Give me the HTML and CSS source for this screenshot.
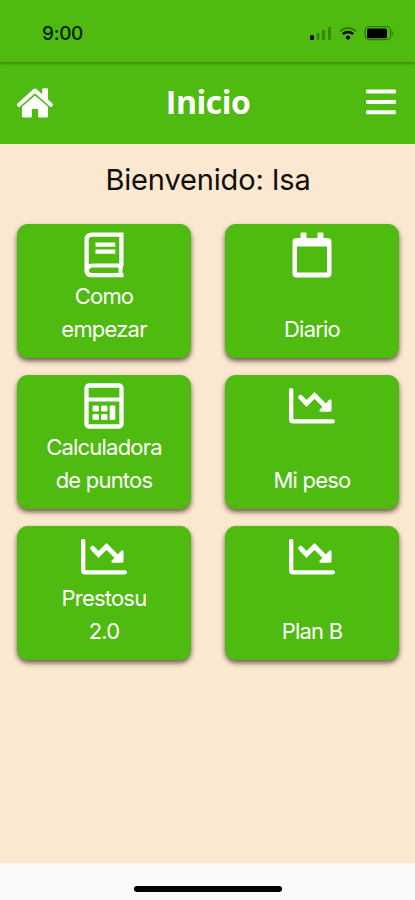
FILE: index.html
```
<!DOCTYPE html>
<html lang="es">
<head>
<meta charset="utf-8">
<title>Inicio</title>
<link rel="stylesheet" href="styles.css">
</head>
<body>
<svg class="defs" aria-hidden="true">
  <symbol id="chart" viewBox="0 0 46 36">
    <path d="M2.2 2V31.5Q2.2 33.3 4 33.3H43.8" fill="none" stroke="currentColor" stroke-width="4.3" stroke-linecap="round"/>
    <path d="M11.5 9.2L17.5 15.5L25.5 7.5L36.5 18.5" fill="none" stroke="currentColor" stroke-width="4.8" stroke-linecap="round"/>
    <path d="M42.5 12.5V22.3Q42.5 23.7 41 23.7H31.5Q29.5 23.2 30.8 21.5L40 12Q41.8 10.5 42.5 12.5Z" fill="currentColor"/>
  </symbol>
</svg>
<header>
  <div class="status">
    <span class="time">9:00</span>
    <svg class="signals" width="88" height="18" viewBox="0 0 88 18">
      <rect x="3" y="10" width="4" height="5" rx="1.5"/>
      <g opacity=".28"><rect x="9.500" y="8" width="3" height="7" rx="1"/><rect x="15" y="5" width="3" height="10" rx="1"/><rect x="21" y="2" width="3" height="13" rx="1"/></g>
      <path d="M33 6Q41 .2 49 6" fill="none" stroke="#000" stroke-width="2" opacity=".35"/>
      <path d="M35.800 9Q41 5 46.200 9" fill="none" stroke="#000" stroke-width="2.500"/>
      <circle cx="41" cy="12.600" r="2.100"/>
      <rect x="58.200" y="1.700" width="25.600" height="13" rx="4" fill="none" stroke="#000" stroke-width="1.300" opacity=".35"/>
      <rect x="60" y="3.500" width="20" height="9.800" rx="1.500"/>
      <path d="M85.300 6V11Q87.300 8.500 85.300 6Z" opacity=".4"/>
    </svg>
  </div>
  <div class="bar">
    <svg class="home" width="38" height="31" viewBox="0 0 38 31" fill="#fff">
      <path d="M1.3 16.8L17.2 2.2Q19 .8 20.8 2.2L26.2 7.2V2.2Q26.2 1.2 27.2 1.2H31Q32 1.2 32 2.2V12.5L36.700 16.800Q37.600 17.700 36.800 18.600L35.700 19.800Q35 20.400 34.200 19.700L19 6.200L3.800 19.700Q3 20.400 2.300 19.800L1.200 18.600Q.4 17.700 1.300 16.800Z"/>
      <path d="M6 19.800L19 8.400L32 19.800V29Q32 30.500 30.500 30.500H23.300Q22.200 30.500 22.200 29.400V22.800Q22.200 22 21.400 22H16.600Q15.800 22 15.800 22.800V29.400Q15.800 30.500 14.700 30.500H7.500Q6 30.500 6 29Z"/>
    </svg>
    <h1>Inicio</h1>
    <svg class="menu" width="30" height="26" viewBox="0 0 30 26" fill="#fff"><rect y=".5" width="30" height="4" rx="1.300"/><rect y="11" width="30" height="4" rx="1.300"/><rect y="21.300" width="30" height="4" rx="1.300"/></svg>
  </div>
</header>
<main>
  <h2>Bienvenido: Isa</h2>
  <div class="grid">
    <a class="card">
      <svg width="40" height="46" viewBox="0 0 40 46" fill="none" stroke="#fff">
        <path d="M37.400 34V2.600H8Q2.600 2.600 2.600 8V38Q2.600 43.200 8 43.200H39.500" stroke-width="4.300"/>
        <path d="M3 39Q3 33.400 8.500 33.400H39" stroke-width="4"/>
        <path d="M36.500 33V43" stroke-width="4"/>
        <path d="M11.500 12.700H31.300M11.500 19.700H31.300" stroke-width="4.300"/>
      </svg>
      <span>Como<br>empezar</span>
    </a>
    <a class="card">
      <svg width="40" height="46" viewBox="0 0 40 46" fill="#fff">
        <path fill-rule="evenodd" d="M8.5 6V1.5Q8.5.5 9.5.5H13.5Q14.5.5 14.5 1.5V6H25.5V1.5Q25.5.5 26.5.5H30.5Q31.5.5 31.5 1.5V6H35.5Q39.5 6 39.5 10V41.5Q39.5 45.5 35.5 45.5H4.500Q.5 45.500 .5 41.5V10Q.5 6 4.500 6ZM5 14.500V40.500H35V14.500Z"/>
      </svg>
      <span>Diario</span>
    </a>
    <a class="card">
      <svg width="40" height="46" viewBox="0 0 40 46" fill="#fff">
        <rect x="2.500" y="2.500" width="35" height="41" rx="2.500" fill="none" stroke="#fff" stroke-width="4.300"/>
        <rect x="3" y="14.500" width="34" height="4"/>
        <rect x="8.500" y="22.500" width="6.500" height="6" rx="1.500"/><rect x="17" y="22.500" width="6.500" height="6" rx="1.500"/><rect x="8.500" y="31" width="6.500" height="6" rx="1.500"/><rect x="17" y="31" width="6.500" height="6" rx="1.500"/><rect x="25.700" y="22.500" width="5.600" height="14.500" rx="1.300"/>
      </svg>
      <span>Calculadora<br>de puntos</span>
    </a>
    <a class="card"><svg class="chart" width="46" height="36"><use href="#chart"/></svg><span>Mi peso</span></a>
    <a class="card"><svg class="chart" width="46" height="36"><use href="#chart"/></svg><span>Prestosu<br>2.0</span></a>
    <a class="card"><svg class="chart" width="46" height="36"><use href="#chart"/></svg><span>Plan B</span></a>
  </div>
</main>
<footer><div class="handle"></div></footer>
</body>
</html>
```
FILE: styles.css
```
* { box-sizing: border-box; }
body {
  margin: 0;
  height: 900px;
  display: flex;
  flex-direction: column;
  overflow: hidden;
  background: #fbe8d1;
  font-family: Inter, "Liberation Sans", sans-serif;
}
.defs { display: none; }
header { background: #4fbb10; height: 144px; }
.status {
  height: 63px;
  padding: 5px 20px 0 42px;
  display: flex;
  align-items: center;
  justify-content: space-between;
  border-bottom: 1px solid #43940f;
  box-shadow: 0 0 3px rgba(30, 80, 0, .7);
}
.time { font-size: 19px; font-weight: 500; letter-spacing: -.3px; color: #082000; }
.bar {
  height: 78px;
  padding: 0 19px 0 16px;
  display: grid;
  grid-template-columns: 38px 1fr 30px;
  align-items: center;
}
h1 {
  margin: 0;
  padding-right: 4px;
  text-align: center;
  color: #fff;
  font: 700 32px/40px "Open Sans", sans-serif;
  letter-spacing: -.5px;
}
main { flex: 1; padding: 16px 16px 0 17px; }
h2 {
  margin: 0 0 24px;
  height: 40px;
  font-size: 29px;
  line-height: 40px;
  font-weight: 400;
  letter-spacing: -.15px;
  text-align: center;
  color: #110d09;
}
.grid {
  display: grid;
  grid-template-columns: 174px 174px;
  justify-content: space-between;
  grid-auto-rows: 134px;
  row-gap: 17px;
}
.card {
  display: flex;
  flex-direction: column;
  align-items: center;
  justify-content: space-between;
  padding: 8px 0 12px;
  border-radius: 11px;
  background: #4fbb10;
  box-shadow: 0 3px 5px rgba(50, 30, 20, .7);
  color: #fff;
  font-size: 22px;
  line-height: 33px;
  letter-spacing: -.8px;
  text-align: center;
}
.chart { margin-top: 5px; }
footer {
  height: 37px;
  background: #fafafa;
  display: flex;
  justify-content: center;
  padding-top: 23px;
}
.handle { width: 148px; height: 6px; border-radius: 3px; background: #000; }
```
